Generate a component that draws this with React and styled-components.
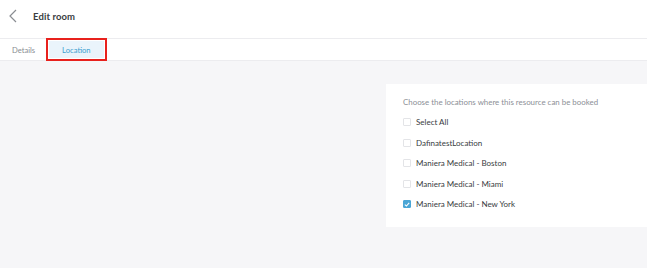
import React from "react";
import styled, { createGlobalStyle } from "styled-components";

const Global = createGlobalStyle`
  html, body { margin: 0; padding: 0; height: 100%; }
  body { background: #f6f6f8; font-family: Lato, "Open Sans", sans-serif; }
  #root { min-height: 268px; display: flex; flex-direction: column; }
`;

const Header = styled.header`
  height: 39px;
  box-sizing: border-box;
  background: #fff;
  border-bottom: 1px solid #ececef;
  display: flex;
  align-items: center;
  padding: 0 0 6px 8px;
  gap: 15px;
`;

const Back = styled.button`
  border: 0;
  background: none;
  padding: 0;
  width: 10px;
  height: 14px;
  display: flex;
  cursor: pointer;
`;

const Title = styled.h1`
  margin: 0;
  font-size: 9.5px;
  font-weight: 700;
  letter-spacing: 0.1px;
  color: #3a3d42;
`;

const Tabs = styled.nav`
  height: 21px;
  background: #fff;
  border-bottom: 1px solid #ececef;
  display: flex;
  align-items: stretch;
  padding-left: 12px;
  gap: 14px;
`;

const Tab = styled.div`
  position: relative;
  display: flex;
  align-items: center;
  font-size: 7.6px;
  color: ${(p) => (p.$active ? "#3d9fd0" : "#8a8d92")};
  background: ${(p) => (p.$active ? "#eaf4fb" : "transparent")};
  padding: 0 ${(p) => (p.$active ? "13px" : "0")};
  margin: ${(p) => (p.$active ? "2px 0" : "0")};
  justify-content: center;
`;

const Highlight = styled.span`
  position: absolute;
  left: -3px;
  right: -3px;
  top: -3px;
  bottom: -3px;
  border: 2px solid #e8211d;
  pointer-events: none;
`;

const Body = styled.main`
  flex: 1;
  display: flex;
  justify-content: flex-end;
  padding-top: 23px;
`;

const Card = styled.section`
  width: 244px;
  height: 130px;
  background: #fff;
  padding: 13px 0 0 17px;
  display: flex;
  flex-direction: column;
`;

const Hint = styled.p`
  margin: 0 0 10px;
  font-size: 7.9px;
  color: #8c8f96;
`;

const List = styled.ul`
  list-style: none;
  margin: 0;
  padding: 0;
  display: flex;
  flex-direction: column;
  gap: 10.6px;
`;

const Item = styled.li`
  display: flex;
  align-items: center;
  gap: 5px;
  font-size: 8px;
  color: #383b40;
  height: 10px;
`;

const Box = styled.span`
  box-sizing: border-box;
  width: 8px;
  height: 8px;
  border: 1px solid ${(p) => (p.$checked ? "#4aa6d6" : "#e3e4e7")};
  background: ${(p) => (p.$checked ? "#4aa6d6" : "#fff")};
  border-radius: 1px;
  display: flex;
  align-items: center;
  justify-content: center;
`;

const locations = [
  { name: "Select All", checked: false },
  { name: "DafinatestLocation", checked: false },
  { name: "Maniera Medical - Boston", checked: false },
  { name: "Maniera Medical - Miami", checked: false },
  { name: "Maniera Medical - New York", checked: true },
];

export default function App() {
  return (
    <>
      <Global />
      <Header>
        <Back aria-label="Back">
          <svg width="10" height="14" viewBox="0 0 10 14">
            <path d="M8 1 L2 7 L8 13" fill="none" stroke="#8a8d92" strokeWidth="1.2" />
          </svg>
        </Back>
        <Title>Edit room</Title>
      </Header>
      <Tabs>
        <Tab>Details</Tab>
        <Tab $active>
          Location
          <Highlight />
        </Tab>
      </Tabs>
      <Body>
        <Card>
          <Hint>Choose the locations where this resource can be booked</Hint>
          <List>
            {locations.map((l) => (
              <Item key={l.name}>
                <Box $checked={l.checked}>
                  {l.checked && (
                    <svg width="6" height="5" viewBox="0 0 6 5">
                      <path d="M0.8 2.6 L2.4 4 L5.2 0.8" fill="none" stroke="#fff" strokeWidth="1.1" />
                    </svg>
                  )}
                </Box>
                {l.name}
              </Item>
            ))}
          </List>
        </Card>
      </Body>
    </>
  );
}
